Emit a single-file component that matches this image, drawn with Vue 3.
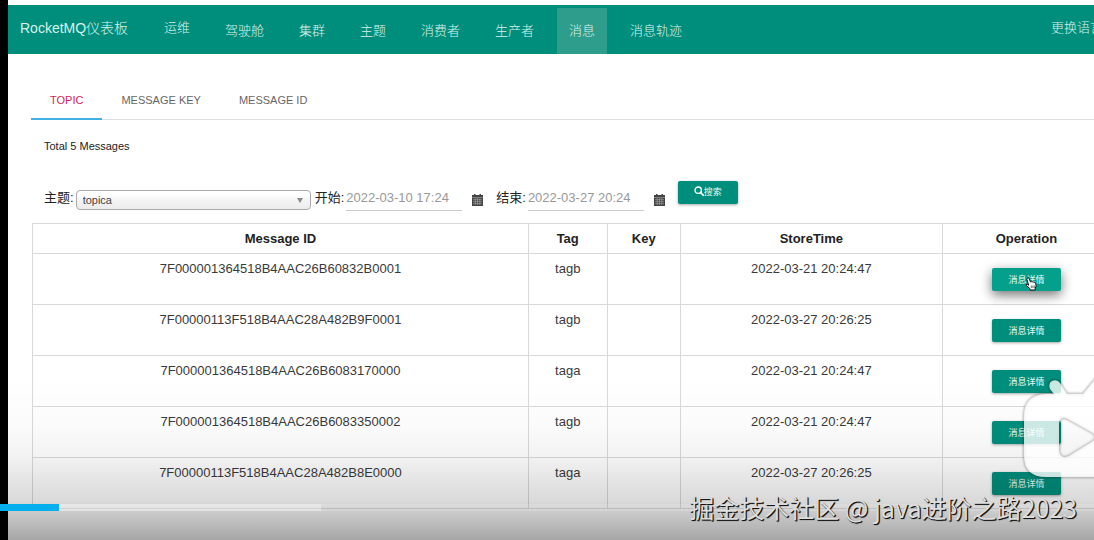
<script setup>
import { ref } from 'vue'

const navItems = ['驾驶舱', '集群', '主题', '消费者', '生产者', '消息', '消息轨迹']
const activeNav = ref('消息')

const tabs = ['TOPIC', 'MESSAGE KEY', 'MESSAGE ID']
const activeTab = ref('TOPIC')

const topic = ref('topica')
const begin = ref('2022-03-10 17:24')
const end = ref('2022-03-27 20:24')

const rows = [
  { id: '7F000001364518B4AAC26B60832B0001', tag: 'tagb', key: '', time: '2022-03-21 20:24:47' },
  { id: '7F00000113F518B4AAC28A482B9F0001', tag: 'tagb', key: '', time: '2022-03-27 20:26:25' },
  { id: '7F000001364518B4AAC26B6083170000', tag: 'taga', key: '', time: '2022-03-21 20:24:47' },
  { id: '7F000001364518B4AAC26B6083350002', tag: 'tagb', key: '', time: '2022-03-21 20:24:47' },
  { id: '7F00000113F518B4AAC28A482B8E0000', tag: 'taga', key: '', time: '2022-03-27 20:26:25' }
]

const played = 5.4
const buffered = 29.3

const tvShape =
  'M36 15 Q34 9 38 7 Q43 5 46 9 L53 20 H69 L82 4 Q87 1 91 5 Q94 9 90 13 L84 20 Q108 20 108 42 V81 Q108 103 84 103 H32 Q10 103 10 81 V42 Q10 21 32 20 L40 20 Z M45 51 Q45 41 54 45 L79 59 Q84 63 79 67 L55 82 Q46 86 45 76 Z'
</script>

<template>
  <div class="stage">
    <div class="page">
      <header class="navbar">
        <a class="brand" href="#">RocketMQ仪表板</a>
        <a class="ops" href="#">运维</a>
        <nav class="menu">
          <a
            v-for="item in navItems"
            :key="item"
            href="#"
            :class="{ active: item === activeNav }"
            @click.prevent="activeNav = item"
          >{{ item }}</a>
        </nav>
        <a class="lang" href="#">更换语言</a>
      </header>

      <main class="content">
        <div class="tabs" role="tablist">
          <button
            v-for="tab in tabs"
            :key="tab"
            type="button"
            role="tab"
            :aria-selected="tab === activeTab"
            :class="{ active: tab === activeTab }"
            @click="activeTab = tab"
          >{{ tab }}</button>
        </div>

        <p class="total">Total 5 Messages</p>

        <form class="filters" @submit.prevent>
          <label for="topic">主题:</label>
          <span class="select">
            <select id="topic" v-model="topic">
              <option>topica</option>
            </select>
          </span>
          <label for="begin">开始:</label>
          <input id="begin" v-model="begin" type="text" />
          <svg class="calendar" viewBox="0 0 11 12" aria-hidden="true">
            <path d="M0 1h2V0h1.500v1h4V0H9v1h2v11H0z" fill="#444" />
            <path d="M0 3.500h11M1 5.700h9M1 7.700h9M1 9.700h9M3.200 4v7M5.500 4v7M7.800 4v7" stroke="#bbb" stroke-width=".5" />
          </svg>
          <label for="end">结束:</label>
          <input id="end" v-model="end" type="text" />
          <svg class="calendar" viewBox="0 0 11 12" aria-hidden="true">
            <path d="M0 1h2V0h1.500v1h4V0H9v1h2v11H0z" fill="#444" />
            <path d="M0 3.500h11M1 5.700h9M1 7.700h9M1 9.700h9M3.200 4v7M5.500 4v7M7.800 4v7" stroke="#bbb" stroke-width=".5" />
          </svg>
          <button class="raised search" type="submit">
            <svg viewBox="0 0 10 10" aria-hidden="true">
              <circle cx="4.200" cy="4.200" r="3.200" fill="none" stroke="#fff" stroke-width="1.400" />
              <path d="M6.500 6.500 9.200 9.200" stroke="#fff" stroke-width="1.700" stroke-linecap="round" />
            </svg>搜索
          </button>
        </form>

        <table>
          <colgroup>
            <col class="c-id" />
            <col class="c-tag" />
            <col class="c-key" />
            <col class="c-time" />
            <col />
          </colgroup>
          <thead>
            <tr>
              <th>Message ID</th>
              <th>Tag</th>
              <th>Key</th>
              <th>StoreTime</th>
              <th>Operation</th>
            </tr>
          </thead>
          <tbody>
            <tr v-for="(row, i) in rows" :key="row.id">
              <td>{{ row.id }}</td>
              <td>{{ row.tag }}</td>
              <td>{{ row.key }}</td>
              <td>{{ row.time }}</td>
              <td class="operation">
                <span class="action">
                  <button type="button" class="raised" :class="{ hovered: i === 0 }">消息详情</button>
                  <svg v-if="i === 0" class="hand" viewBox="0 0 12 14" aria-hidden="true">
                    <path
                      d="M2.300 1.300Q3.300.3 4.200 1.400L5.500 5Q6.300 4.200 7 5 8 4.300 8.700 5.200 10 4.700 10.600 6.200L11.200 9 10.200 11.200V13H5V11.700L1.100 8.300Q.8 7 2.300 7.300L3.700 8.200 1.900 2.600Z"
                      fill="#fff"
                      stroke="#111"
                      stroke-width="1"
                      stroke-linejoin="round"
                    />
                    <path d="M6.300 8.500v2.500M7.900 8.500v2.500M9.300 8.500v2.500" stroke="#111" stroke-width=".6" />
                  </svg>
                </span>
              </td>
            </tr>
          </tbody>
        </table>
      </main>
    </div>

    <div class="shade"></div>
    <div class="progress" role="progressbar" aria-label="Playback" :aria-valuenow="played">
      <div class="buffered" :style="{ width: buffered + '%' }"></div>
      <div class="played" :style="{ width: played + '%' }"></div>
    </div>

    <svg class="player" viewBox="0 0 110 110" aria-hidden="true">
      <path class="player-edge" :d="tvShape" />
      <path :d="tvShape" fill="#fff" fill-opacity=".8" fill-rule="evenodd" />
    </svg>
    <div class="watermark">掘金技术社区 @ java进阶之路2023</div>
  </div>
</template>

<style>
body {
  margin: 0;
  background: #000;
}
</style>

<style scoped>
.stage {
  position: relative;
  min-height: 100vh;
  overflow: hidden;
  font-family: "Liberation Sans", "Noto Sans CJK SC", sans-serif;
  font-size: 13px;
  color: #222;
}

.page {
  box-sizing: border-box;
  min-height: 100vh;
  margin: 0 -17px 0 8px;
  padding-top: 5px;
  background: #fff;
}

.navbar {
  display: flex;
  align-items: stretch;
  height: 49px;
  padding: 0 8px 0 12px;
  background: #008e7c;
  font-weight: 300;
}

.navbar a {
  color: #d8f2ec;
  line-height: 46px;
  text-decoration: none;
  white-space: nowrap;
}

.navbar .brand {
  width: 144px;
  font-size: 14px;
}

.ops {
  margin-right: 23px;
}

.menu {
  display: flex;
  gap: 11px;
  padding-top: 3px;
}

.menu a {
  padding: 0 12px;
}

.menu .active {
  background: #2f9d8b;
}

.navbar .lang {
  margin-left: auto;
}

.content {
  padding: 31px 0 0 24px;
}

.tabs {
  display: flex;
  margin-left: -1px;
  border-bottom: 1px solid #ddd;
}

.tabs button {
  margin: 0 0 -1px;
  padding: 0 19px 3px;
  border: 0;
  border-bottom: 2px solid transparent;
  background: none;
  color: #666;
  font: 11px/30px "Liberation Sans", sans-serif;
}

.tabs .active {
  border-bottom-color: #3fb1e5;
  color: #cf1f56;
}

.total {
  margin: 16px 12px 0;
  font-size: 11px;
  line-height: 20px;
}

.filters {
  display: flex;
  align-items: flex-start;
  margin: 25px 12px 0;
  height: 42px;
}

.filters label {
  flex: none;
  padding-top: 7px;
  line-height: 20px;
}

.select {
  position: relative;
  width: 235px;
  margin: 9px 4px 0 2px;
}

.select::after {
  content: "";
  position: absolute;
  right: 8px;
  top: 8px;
  border: solid transparent;
  border-width: 5px 3px 0;
  border-top-color: #888;
}

.select select {
  display: block;
  box-sizing: border-box;
  width: 100%;
  height: 20px;
  padding: 0 6px;
  appearance: none;
  border: 1px solid #aaa;
  border-radius: 4px;
  background: linear-gradient(#fff 20%, #f4f4f4 50%, #ececec);
  color: #444;
  font: 11px "Liberation Sans", sans-serif;
}

.filters input {
  box-sizing: border-box;
  width: 116px;
  height: 26px;
  margin: 4px 10px 0 2px;
  padding: 0 0 1px;
  border: 0;
  border-bottom: 1px solid #ccc;
  background: none;
  color: #999;
  font: 13px "Liberation Sans", sans-serif;
}

.calendar {
  width: 11px;
  height: 12px;
  margin: 13px 13px 0 0;
}

.raised {
  display: block;
  height: 23px;
  padding: 0;
  border: 0;
  border-radius: 2px;
  background: #008e7c;
  box-shadow: 0 1px 3px rgba(0, 0, 0, .35);
  color: #e4fbf5;
  font: 9px "Liberation Sans", "Noto Sans CJK SC", sans-serif;
}

.raised.hovered {
  background: #04a08b;
  box-shadow: 0 4px 12px rgba(0, 0, 0, .55);
}

.search {
  display: flex;
  align-items: center;
  justify-content: center;
  width: 60px;
  padding-bottom: 3px;
}

.search svg {
  width: 10px;
  height: 10px;
}

table {
  width: 100%;
  table-layout: fixed;
  border-collapse: collapse;
}

.c-id { width: 46%; }
.c-tag { width: 7.3%; }
.c-key { width: 6.8%; }
.c-time { width: 24.3%; }

th,
td {
  box-sizing: border-box;
  padding: 0;
  border: 1px solid #d9d9d9;
  line-height: 20px;
  text-align: center;
  vertical-align: top;
}

th {
  height: 30px;
  padding-top: 5px;
}

td {
  height: 51px;
  padding-top: 5px;
  color: #3a3a3a;
}

td.operation {
  padding-top: 14px;
}

.action {
  display: inline-block;
  position: relative;
  vertical-align: top;
}

.action button {
  width: 69px;
}

.hand {
  position: absolute;
  left: 33px;
  top: 9px;
  width: 12px;
  height: 14px;
}

.shade {
  position: absolute;
  inset: auto 0 0;
  height: 160px;
  background: linear-gradient(transparent, rgba(0, 0, 0, .02) 31%, rgba(0, 0, 0, .05) 48%, rgba(0, 0, 0, .1) 62%, rgba(0, 0, 0, .15) 76%, rgba(0, 0, 0, .2) 82%, rgba(0, 0, 0, .35));
  pointer-events: none;
}

.progress {
  position: absolute;
  inset: auto 0 29px;
  height: 7px;
  background: rgba(255, 255, 255, .15);
}

.progress div {
  position: absolute;
  inset: 0 auto 0 0;
}

.buffered {
  background: rgba(255, 255, 255, .35);
}

.played {
  background: #05aeec;
}

.player {
  position: absolute;
  right: -30px;
  bottom: 56px;
  width: 110px;
  height: 110px;
}

.player-edge {
  fill: none;
  stroke: rgba(0, 0, 0, .3);
  stroke-width: 2;
  filter: blur(1px);
}

.watermark {
  position: absolute;
  right: 17px;
  bottom: 14px;
  color: #ddd;
  font: 400 25px/37px "Noto Sans CJK SC", sans-serif;
  text-shadow: 1px 1px 1px #111, 1px 1px 0 #333;
  white-space: nowrap;
}
</style>
